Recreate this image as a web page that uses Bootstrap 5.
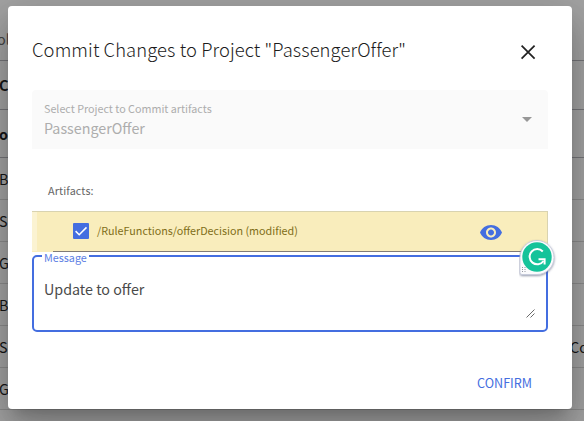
<!DOCTYPE html>
<html lang="en">
<head>
<meta charset="utf-8">
<meta name="viewport" content="width=device-width, initial-scale=1">
<title>Commit Changes</title>
<link href="https://cdn.jsdelivr.net/npm/bootstrap@5.3.0/dist/css/bootstrap.min.css" rel="stylesheet">
<style>
  body { font-family: "Noto Sans CJK SC", "Noto Sans", sans-serif; background: #a3a3a3; height: 421px; }
  .backdrop-rows { height: 421px; color: #161616; font-size: 14.4px; line-height: 20px; }
  .backdrop-rows > div { flex: none; height: 42px; border-bottom: 1px solid #8b8b8b; white-space: nowrap; text-indent: -1px; }
  .backdrop-rows > .r-top { height: 61px; padding-top: 29px; border-color: #757579; color: #444; text-indent: -3px; }
  .backdrop-rows > .r-head { height: 49px; border-color: #757579; font-weight: 700; }
  .backdrop-rows > .r-sub { height: 48px; border-color: #757579; font-weight: 700; }
  .side { margin-right: -4px; }
  .commit-dialog { left: 8px; top: 6px; width: 564px; height: 403px; border: 0; border-radius: 4px; padding: 0 24px;
    box-shadow: 0 11px 15px -7px rgba(0,0,0,.2), 0 24px 38px 3px rgba(0,0,0,.14), 0 9px 46px 8px rgba(0,0,0,.12); }
  .dialog-head { height: 84px; padding: 0 11px 0 0; }
  .dialog-title { font-size: 18.4px; line-height: 24px; margin: 0 0 -2px; color: #1c1c1c; font-weight: 300; letter-spacing: .09px; }
  .close-x { width: 18px; height: 18px; margin-top: 8px; }
  .project-field { height: 59px; background: #fafafa; border-radius: 4px 4px 0 0; padding: 9px 16px 0 12px; color: #adadad; }
  .project-field .cap { font-size: 10.75px; line-height: 19px; }
  .project-field .val { font-size: 14.3px; line-height: 20px; }
  .caret { margin-top: 18px; }
  .artifacts-label { height: 62px; padding: 31px 16px 0; font-size: 10.8px; line-height: 20px; color: #666; font-weight: 400; letter-spacing: .12px; }
  .artifact-row { height: 41px; background: #f9edbc; border-top: 1px solid #d9d3b0; border-right: 1px solid #d9d3b0; padding: 0 45px 0 41px; color: #806d18; }
  .artifact-row::before { content: ""; position: absolute; left: 0; top: 0; width: 5px; height: 39px; background: #fbf3d2; }
  .artifact-row::after { content: ""; position: absolute; left: 21px; right: 0; bottom: 0; height: 1px; background: #807b76; }
  .tick { width: 16px; height: 16px; margin-bottom: 2px; }
  .artifact-name { font-size: 10.75px; line-height: 18px; margin: 0 0 3px 8px; font-weight: 400; }
  .view-eye { margin: 2px 0 0 auto; }
  .message-box { margin-top: 3px; height: 77px; border: 2px solid #446ee0; border-radius: 5px; color: #4a4a4a; }
  .message-label { left: 8px; top: -9px; height: 18px; padding: 0 2px; background: linear-gradient(transparent 7px, #fff 7px); font-size: 10.8px; line-height: 18px; color: #5c80e4; }
  .message-text { padding: 22px 10px 0; font-size: 14.3px; line-height: 20px; }
  .grip { right: 11px; bottom: 12px; }
  .assist { left: 511px; top: 231px; }
  .confirm-btn { font-size: 12.6px; line-height: 20px; color: #446ee0; padding: 0; margin: 41px 16px 0 0; border: 0; font-weight: 400; }
</style>
</head>
<body class="overflow-hidden position-relative">
<div class="backdrop-rows d-flex flex-column overflow-hidden">
  <div class="r-top">ole</div>
  <div class="r-head d-flex align-items-center">Co</div>
  <div class="r-sub d-flex align-items-center">ov</div>
  <div class="d-flex align-items-center">B</div>
  <div class="d-flex align-items-center">SI</div>
  <div class="d-flex align-items-center">G</div>
  <div class="d-flex align-items-center">B</div>
  <div class="d-flex align-items-center justify-content-between"><span>SI</span><span class="side">Co</span></div>
  <div class="d-flex align-items-center">G</div>
</div>

<div class="modal-content commit-dialog position-absolute bg-white" role="dialog">
  <div class="dialog-head d-flex justify-content-between align-items-center">
    <h1 class="dialog-title">Commit Changes to Project "PassengerOffer"</h1>
    <svg class="close-x" viewBox="0 0 18 18" fill="none" stroke="#222" stroke-width="1.7"><path d="M2.6 2.6 15.6 15.6M15.6 2.6 2.6 15.6"/></svg>
  </div>
  <div class="project-field d-flex justify-content-between">
    <div>
      <div class="cap">Select Project to Commit artifacts</div>
      <div class="val">PassengerOffer</div>
    </div>
    <svg class="caret" width="10" height="5" viewBox="0 0 10 5"><path d="M0 0H10L5 5Z" fill="#979797"/></svg>
  </div>
  <div class="artifacts-label">Artifacts:</div>
  <div class="artifact-row position-relative d-flex align-items-center">
    <svg class="tick" viewBox="0 0 16 16"><rect width="16" height="16" rx="1" fill="#446ee0"/><path d="M2.6 8.1 6.2 11.7 13.5 4.4" fill="none" stroke="#fff" stroke-width="1.5"/></svg>
    <span class="artifact-name">/RuleFunctions/offerDecision (modified)</span>
    <svg class="view-eye" width="22" height="16" viewBox="1 4.5 22 16"><path fill="#446ee0" d="M12 4.5C7 4.5 2.73 7.61 1 12c1.73 4.39 6 7.5 11 7.5s9.27-3.11 11-7.5c-1.73-4.39-6-7.5-11-7.5zM12 17c-2.76 0-5-2.24-5-5s2.24-5 5-5 5 2.24 5 5-2.24 5-5 5zm0-8c-1.66 0-3 1.34-3 3s1.34 3 3 3 3-1.34 3-3-1.34-3-3-3z"/></svg>
  </div>
  <div class="message-box position-relative">
    <span class="message-label position-absolute">Message</span>
    <div class="message-text">Update to offer</div>
    <svg class="grip position-absolute" width="9" height="9" viewBox="0 0 9 9" stroke="#444" stroke-width=".8"><path d="M.5 8.5 8.5.5M4.5 8.5 8.5 4.5"/></svg>
  </div>
  <button class="btn confirm-btn align-self-end" type="button">CONFIRM</button>

  <svg class="assist position-absolute" width="42" height="44" viewBox="0 0 42 44">
    <defs><filter id="soft" x="-20%" y="-20%" width="140%" height="140%"><feDropShadow dx="0" dy="1" stdDeviation="1" flood-color="#505878" flood-opacity=".65"/></filter></defs>
    <path filter="url(#soft)" d="M1 20.5a17 17 0 1 1 17 17H3a2 2 0 0 1-2-2Z" fill="#fbfbfd" stroke="#c3c8da" stroke-width=".8"/>
    <circle cx="18" cy="20" r="14.7" fill="#15c39a"/>
    <path d="M23.8 14.5A7.6 7.6 0 1 0 24.5 24" fill="none" stroke="#fff" stroke-width="2"/>
    <path d="M19.5 22.2H25.6V27.5" fill="none" stroke="#fff" stroke-width="2"/>
    <path d="M3.5 30v6M6 30v6" stroke="#92969f" stroke-width="1" stroke-dasharray="1 1"/>
  </svg>
</div>
<script src="https://cdn.jsdelivr.net/npm/bootstrap@5.3.0/dist/js/bootstrap.bundle.min.js"></script>
</body>
</html>
